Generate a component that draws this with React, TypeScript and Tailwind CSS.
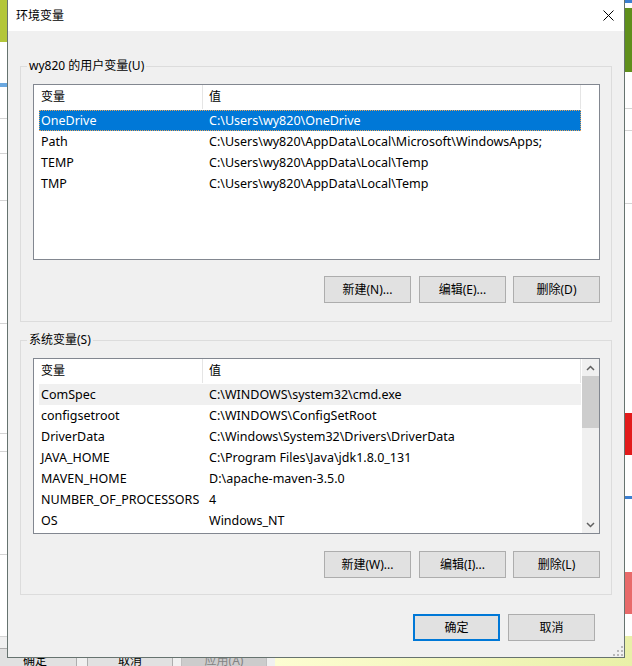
import * as React from "react";

const userVars = [
  { name: "OneDrive", value: "C:\\Users\\wy820\\OneDrive" },
  { name: "Path", value: "C:\\Users\\wy820\\AppData\\Local\\Microsoft\\WindowsApps;" },
  { name: "TEMP", value: "C:\\Users\\wy820\\AppData\\Local\\Temp" },
  { name: "TMP", value: "C:\\Users\\wy820\\AppData\\Local\\Temp" },
];

const sysVars = [
  { name: "ComSpec", value: "C:\\WINDOWS\\system32\\cmd.exe" },
  { name: "configsetroot", value: "C:\\WINDOWS\\ConfigSetRoot" },
  { name: "DriverData", value: "C:\\Windows\\System32\\Drivers\\DriverData" },
  { name: "JAVA_HOME", value: "C:\\Program Files\\Java\\jdk1.8.0_131" },
  { name: "MAVEN_HOME", value: "D:\\apache-maven-3.5.0" },
  { name: "NUMBER_OF_PROCESSORS", value: "4" },
  { name: "OS", value: "Windows_NT" },
];

type Row = { name: string; value: string };

function Chevron({ up }: { up?: boolean }) {
  return (
    <svg width="9" height="6" viewBox="0 0 9 6">
      <path
        d={up ? "M1 5 L4.5 1.5 L8 5" : "M1 1 L4.5 4.5 L8 1"}
        fill="none"
        stroke="#606060"
        strokeWidth="1.5"
      />
    </svg>
  );
}

function Header() {
  return (
    <div className="flex h-[25px] items-start">
      <div className="w-[164px] h-[24px] pl-[2px] leading-[24px] border-r border-[#e5e5e5]">变量</div>
      <div className="w-[378px] h-[24px] pl-[6px] leading-[24px] border-r border-[#e5e5e5]">值</div>
    </div>
  );
}

function VarRow({ row, mode }: { row: Row; mode?: "active" | "inactive" }) {
  const cls =
    mode === "active"
      ? "bg-[#0078d7] text-white outline outline-1 outline-dotted outline-[#e6a35a] -outline-offset-1"
      : mode === "inactive"
      ? "bg-[#f0f0f0]"
      : "";
  return (
    <div className={`flex w-[542px] h-[21px] leading-[21px] text-[12.5px] whitespace-nowrap ${cls}`}>
      <div className="w-[164px] pl-[2px] overflow-hidden">{row.name}</div>
      <div className="w-[378px] pl-[6px] overflow-hidden">{row.value}</div>
    </div>
  );
}

function Btn({ label, def }: { label: string; def?: boolean }) {
  return (
    <button
      className={`w-[87px] h-[27px] bg-[#e1e1e1] text-[12px] text-black ${
        def ? "border-2 border-[#0078d7]" : "border border-[#adadad]"
      }`}
    >
      {label}
    </button>
  );
}

function Group({
  label,
  children,
  className,
}: {
  label: string;
  children: React.ReactNode;
  className?: string;
}) {
  return (
    <div className={`relative mx-[12px] border border-[#dcdcdc] pl-[12px] pr-[11px] ${className ?? ""}`}>
      <span className="absolute left-[6px] top-[-9px] bg-[#f0f0f0] px-[2px] leading-[16px]">{label}</span>
      {children}
    </div>
  );
}

function ButtonRow({ labels, className }: { labels: string[]; className: string }) {
  return (
    <div className={`flex justify-end ${className}`}>
      <Btn label={labels[0]} />
      <div className="w-[8px]" />
      <Btn label={labels[1]} />
      <div className="w-[7px]" />
      <Btn label={labels[2]} />
    </div>
  );
}

export default function App() {
  return (
    <div
      className="relative w-[632px] h-[666px] overflow-hidden bg-white text-[12px] text-black"
      style={{ fontFamily: '"Noto Sans", "Noto Sans CJK SC", sans-serif' }}
    >
      {/* background windows, left edge */}
      <div className="absolute left-0 top-0 w-[7px] h-[42px] bg-[#b3c63a]" />
      <div className="absolute left-0 top-[83px] w-[7px] h-[4px] bg-[#6aa8e0]" />
      <div className="absolute left-0 top-[118px] w-[7px] h-px bg-[#d4d4d4]" />
      <div className="absolute left-0 top-[153px] w-[7px] h-px bg-[#d4d4d4]" />
      <div className="absolute left-0 top-[200px] w-[7px] h-px bg-[#d4d4d4]" />
      <div className="absolute left-0 top-[323px] w-[7px] h-px bg-[#d4d4d4]" />
      <div className="absolute left-0 top-[433px] w-[7px] h-px bg-[#d4d4d4]" />
      <div className="absolute left-0 top-[451px] w-[7px] h-px bg-[#d4d4d4]" />
      <div className="absolute left-0 top-[554px] w-[7px] h-px bg-[#d4d4d4]" />
      <div className="absolute left-0 top-[636px] w-[275px] h-[30px] bg-[#f0f0f0] border-t border-[#d4d4d4]" />

      {/* background, bottom */}
      <div className="absolute left-[275px] top-[636px] w-[357px] h-[30px] bg-gradient-to-r from-[#fdfdd2] to-[#e9f0a8]" />
      <div className="absolute left-[-8px] top-[648px] w-[85px] h-[24px] border border-[#adadad] bg-[#e1e1e1] pl-[30px] leading-[24px]">确定</div>
      <div className="absolute left-[87px] top-[648px] w-[86px] h-[24px] border border-[#adadad] bg-[#e1e1e1] text-center leading-[24px]">取消</div>
      <div className="absolute left-[181px] top-[648px] w-[86px] h-[24px] border border-[#bfbfbf] bg-[#cccccc] text-[#838383] text-center leading-[24px]">应用(A)</div>

      {/* background, right edge */}
      <div className="absolute left-[625px] top-0 w-[7px] h-[3px] bg-[#3b7fd0]" />
      <div className="absolute left-[625px] top-[8px] w-[7px] h-[64px] bg-[#5f8f1c]" />
      <div className="absolute left-[625px] top-[108px] w-[7px] h-px bg-[#d4d4d4]" />
      <div className="absolute left-[625px] top-[130px] w-[7px] h-px bg-[#d4d4d4]" />
      <div className="absolute left-[625px] top-[203px] w-[7px] h-px bg-[#d4d4d4]" />
      <div className="absolute left-[625px] top-[413px] w-[7px] h-[42px] bg-[#e21b1b]" />
      <div className="absolute left-[625px] top-[496px] w-[7px] h-[3px] bg-[#3b7fd0]" />
      <div className="absolute left-[625px] top-[572px] w-[7px] h-[42px] bg-[#e86a6a]" />

      {/* dialog */}
      <div className="absolute left-[7px] top-0 w-[618px] h-[658px] border border-t-0 border-[#66736f] bg-[#f0f0f0] flex flex-col">
        <div className="h-[31px] bg-white flex items-center justify-between pl-[8px] pr-[10px]">
          <span className="leading-[16px]">环境变量</span>
          <svg width="11" height="11" viewBox="0 0 11 11">
            <path d="M0.5 0.5 L10.5 10.5 M10.5 0.5 L0.5 10.5" stroke="#000" strokeWidth="1" />
          </svg>
        </div>

        <Group label="wy820 的用户变量(U)" className="mt-[35px] pt-[17px] pb-[18px]">
          <div className="h-[176px] border border-[#828790] bg-white pl-[5px] overflow-hidden">
            <Header />
            {userVars.map((r, i) => (
              <VarRow key={r.name} row={r} mode={i === 0 ? "active" : undefined} />
            ))}
          </div>
          <ButtonRow className="mt-[16px]" labels={["新建(N)...", "编辑(E)...", "删除(D)"]} />
        </Group>

        <Group label="系统变量(S)" className="mt-[18px] pt-[17px] pb-[16px]">
          <div className="h-[176px] border border-[#828790] bg-white flex overflow-hidden">
            <div className="flex-1 pl-[5px] overflow-hidden">
              <Header />
              {sysVars.map((r, i) => (
                <VarRow key={r.name} row={r} mode={i === 0 ? "inactive" : undefined} />
              ))}
            </div>
            <div className="w-[17px] bg-[#f0f0f0] flex flex-col">
              <div className="h-[17px] flex items-center justify-center">
                <Chevron up />
              </div>
              <div className="h-[52px] bg-[#cdcdcd]" />
              <div className="flex-1" />
              <div className="h-[17px] flex items-center justify-center">
                <Chevron />
              </div>
            </div>
          </div>
          <ButtonRow className="mt-[17px]" labels={["新建(W)...", "编辑(I)...", "删除(L)"]} />
        </Group>

        <div className="mt-[19px] mr-[29px] flex justify-end gap-[8px]">
          <Btn label="确定" def />
          <Btn label="取消" />
        </div>

        <svg className="absolute right-[1px] bottom-[1px]" width="10" height="10" viewBox="0 0 10 10">
          <rect x="8" y="0" width="2" height="2" fill="#b8b8b8" />
          <rect x="4" y="4" width="2" height="2" fill="#b8b8b8" />
          <rect x="8" y="4" width="2" height="2" fill="#b8b8b8" />
          <rect x="0" y="8" width="2" height="2" fill="#b8b8b8" />
          <rect x="4" y="8" width="2" height="2" fill="#b8b8b8" />
          <rect x="8" y="8" width="2" height="2" fill="#b8b8b8" />
        </svg>
      </div>
    </div>
  );
}
